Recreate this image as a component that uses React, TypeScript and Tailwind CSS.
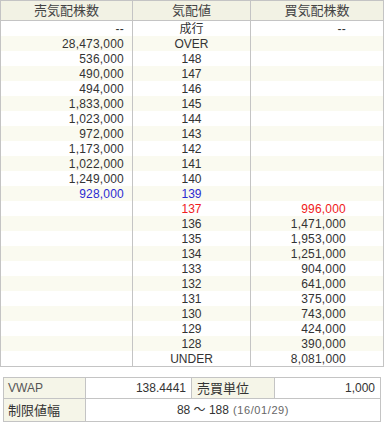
import React from "react";

type Row = { sell: string; price: string; buy: string; tone?: "blue" | "red" };

const rows: Row[] = [
  { sell: "--", price: "成行", buy: "--" },
  { sell: "28,473,000", price: "OVER", buy: "" },
  { sell: "536,000", price: "148", buy: "" },
  { sell: "490,000", price: "147", buy: "" },
  { sell: "494,000", price: "146", buy: "" },
  { sell: "1,833,000", price: "145", buy: "" },
  { sell: "1,023,000", price: "144", buy: "" },
  { sell: "972,000", price: "143", buy: "" },
  { sell: "1,173,000", price: "142", buy: "" },
  { sell: "1,022,000", price: "141", buy: "" },
  { sell: "1,249,000", price: "140", buy: "" },
  { sell: "928,000", price: "139", buy: "", tone: "blue" },
  { sell: "", price: "137", buy: "996,000", tone: "red" },
  { sell: "", price: "136", buy: "1,471,000" },
  { sell: "", price: "135", buy: "1,953,000" },
  { sell: "", price: "134", buy: "1,251,000" },
  { sell: "", price: "133", buy: "904,000" },
  { sell: "", price: "132", buy: "641,000" },
  { sell: "", price: "131", buy: "375,000" },
  { sell: "", price: "130", buy: "743,000" },
  { sell: "", price: "129", buy: "424,000" },
  { sell: "", price: "128", buy: "390,000" },
  { sell: "", price: "UNDER", buy: "8,081,000" },
];

const font = {
  fontFamily: '"Liberation Sans", Arial, "Noto Sans CJK JP", sans-serif',
};

export default function App() {
  return (
    <div className="w-[384px] h-[424px] bg-white text-[12px] text-[#333333] leading-none" style={font}>
      <div className="w-[384px] border border-[#c4c4c4]">
        <div className="grid grid-cols-[132px_118px_132px] h-[20px] bg-[#f2f2e4] border-b border-[#c4c4c4] text-[13px] text-[#444444]">
          <div className="border-r border-[#c4c4c4] flex items-center justify-center">売気配株数</div>
          <div className="border-r border-[#c4c4c4] flex items-center justify-center">気配値</div>
          <div className="flex items-center justify-center">買気配株数</div>
        </div>
        {rows.map((r, i) => {
          const color =
            r.tone === "blue" ? "text-[#2b2bd0]" : r.tone === "red" ? "text-[#f02020]" : "";
          return (
            <div
              key={i}
              className={`grid grid-cols-[132px_118px_132px] h-[15px] ${i % 2 === 1 ? "bg-[#fafaf0]" : "bg-white"}`}
            >
              <div className={`border-r border-[#c4c4c4] flex items-center justify-end pr-[8px] tracking-[0.2px] ${r.tone === "blue" ? color : ""}`}>
                {r.sell}
              </div>
              <div className={`border-r border-[#c4c4c4] flex items-center justify-center ${color}`}>{r.price}</div>
              <div className={`flex items-center justify-end pr-[37px] tracking-[0.2px] ${r.tone === "red" ? color : ""}`}>{r.buy}</div>
            </div>
          );
        })}
      </div>
      <div className="ml-[3px] mt-[10px] w-[378px] border border-[#c4c4c4]">
        <div className="grid grid-cols-[82px_106px_83px_1fr] h-[21px] border-b border-[#c4c4c4]">
          <div className="bg-[#f5f5e8] border-r border-[#c4c4c4] flex items-center pl-[4px] text-[#555555]">VWAP</div>
          <div className="border-r border-[#c4c4c4] flex items-center justify-end pr-[5px]">138.4441</div>
          <div className="bg-[#f5f5e8] border-r border-[#c4c4c4] flex items-center pl-[5px] text-[13px]">売買単位</div>
          <div className="flex items-center justify-end pr-[5px]">1,000</div>
        </div>
        <div className="grid grid-cols-[82px_1fr] h-[22px]">
          <div className="bg-[#f5f5e8] border-r border-[#c4c4c4] flex items-center pl-[4px] text-[13px]">制限値幅</div>
          <div className="flex items-center justify-center">
            88 ～ 188<span className="ml-[4px] text-[11px] tracking-[0.6px] text-[#666666]">(16/01/29)</span>
          </div>
        </div>
      </div>
    </div>
  );
}
